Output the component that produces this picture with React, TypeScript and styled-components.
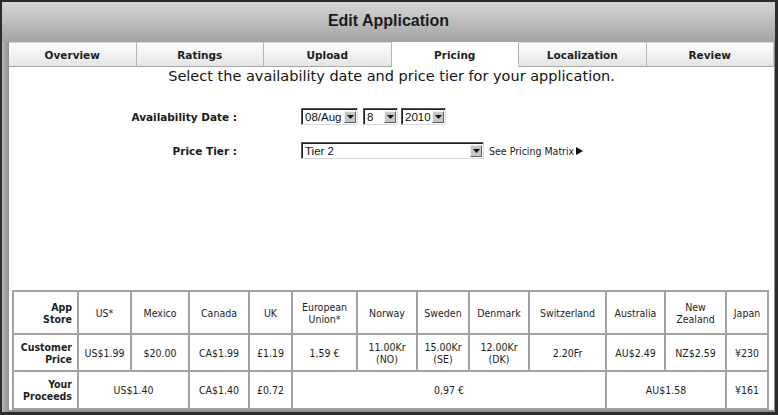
import React from 'react';
import styled, {createGlobalStyle, css} from 'styled-components';

const GlobalStyle = createGlobalStyle`
  html, body {
    margin: 0;
    padding: 0;
    background: #ffffff;
  }
  * {
    box-sizing: border-box;
  }
`;

const TABS = ['Overview', 'Ratings', 'Upload', 'Pricing', 'Localization', 'Review'];

const COL_WIDTHS = [65, 53, 58, 60, 43, 65, 60, 52, 60, 77, 59, 61, 42];

const STORES = ['US*', 'Mexico', 'Canada', 'UK', 'European\nUnion*', 'Norway', 'Sweden', 'Denmark', 'Switzerland', 'Australia', 'New\nZealand', 'Japan'];
const PRICES = ['US$1.99', '$20.00', 'CA$1.99', '£1.19', '1,59 €', '11.00Kr\n(NO)', '15.00Kr\n(SE)', '12.00Kr\n(DK)', '2.20Fr', 'AU$2.49', 'NZ$2.59', '¥230'];
const PROCEEDS: { value: string; span: number }[] = [
  {value: 'US$1.40', span: 2},
  {value: 'CA$1.40', span: 1},
  {value: '£0.72', span: 1},
  {value: '0,97 €', span: 5},
  {value: 'AU$1.58', span: 2},
  {value: '¥161', span: 1},
];

function Lines({text}: { text: string }) {
  const parts = text.split('\n');
  return (
      <>
        {parts.map((p, i) => (
            <React.Fragment key={i}>
              {p}
              {i < parts.length - 1 && <br/>}
            </React.Fragment>
        ))}
      </>
  );
}

function DropSelect({value, width}: { value: string; width: number }) {
  return (
      <SelectBox $width={width}>
        <SelectText>{value}</SelectText>
        <SelectButton>
          <svg width="7" height="4" viewBox="0 0 7 4">
            <path d="M0 0h7L3.5 4z" fill="#111"/>
          </svg>
        </SelectButton>
      </SelectBox>
  );
}

export default function App() {
  return (
      <>
        <GlobalStyle/>
        <Window>
          <TitleBar>Edit Application</TitleBar>
          <Body>
            <Panel>
              <TabRow>
                {TABS.map(t => (
                    <Tab key={t} $active={t === 'Pricing'}>{t}</Tab>
                ))}
              </TabRow>
              <Intro>Select the availability date and price tier for your application.</Intro>
              <Form>
                <FormRow>
                  <Label>Availability Date :</Label>
                  <Controls>
                    <DropSelect value="08/Aug" width={57}/>
                    <Gap $w={5}/>
                    <DropSelect value="8" width={35}/>
                    <Gap $w={3}/>
                    <DropSelect value="2010" width={45}/>
                  </Controls>
                </FormRow>
                <FormRow>
                  <Label>Price Tier :</Label>
                  <Controls>
                    <DropSelect value="Tier 2" width={183}/>
                    <MatrixLink>
                      See Pricing Matrix
                      <svg width="7" height="8" viewBox="0 0 7 8">
                        <path d="M0 0l7 4-7 4z" fill="#111"/>
                      </svg>
                    </MatrixLink>
                  </Controls>
                </FormRow>
              </Form>
              <PriceTable>
                <colgroup>
                  {COL_WIDTHS.map((w, i) => <col key={i} style={{width: w}}/>)}
                </colgroup>
                <tbody>
                <Row $h={43}>
                  <HeadCell>App<br/>Store</HeadCell>
                  {STORES.map(s => <Cell key={s}><Lines text={s}/></Cell>)}
                </Row>
                <Row $h={37}>
                  <HeadCell>Customer<br/>Price</HeadCell>
                  {PRICES.map(p => <Cell key={p}><Lines text={p}/></Cell>)}
                </Row>
                <Row $h={38}>
                  <HeadCell>Your<br/>Proceeds</HeadCell>
                  {PROCEEDS.map(p => <Cell key={p.value} colSpan={p.span}>{p.value}</Cell>)}
                </Row>
                </tbody>
              </PriceTable>
            </Panel>
          </Body>
        </Window>
      </>
  );
}

const Window = styled.div`
  width: 778px;
  height: 415px;
  display: flex;
  flex-direction: column;
  background: #9c9c9c;
  border-style: solid;
  border-color: #2c2c2c;
  border-width: 2px 3px 3px 2px;
`;

const TitleBar = styled.div`
  height: 40px;
  flex: none;
  display: flex;
  align-items: center;
  justify-content: center;
  padding-bottom: 2px;
  background: linear-gradient(#d6d6d6, #a3a3a3);
  font-family: "Liberation Sans", Arial, sans-serif;
  font-weight: bold;
  font-size: 16px;
  color: #1c1c1c;
`;

const Body = styled.div`
  flex: 1;
  display: flex;
  padding: 0 2px 2px 7px;
  background: linear-gradient(90deg, #b4b4b4, #8f8f8f 7px);
`;

const Panel = styled.div`
  flex: 1;
  display: flex;
  flex-direction: column;
  background: #ffffff;
`;

const TabRow = styled.div`
  display: grid;
  grid-template-columns: repeat(6, 1fr);
  height: 25px;
  flex: none;
`;

const Tab = styled.div<{ $active?: boolean }>`
  display: flex;
  align-items: center;
  justify-content: center;
  font-family: "DejaVu Sans", Verdana, sans-serif;
  font-weight: bold;
  font-size: 10.5px;
  color: #1e1e1e;
  background: linear-gradient(#ffffff, #e4e4e4);
  border-top: 1px solid #d8d8d8;
  border-right: 1px solid #b4b4b4;
  border-bottom: 1px solid #a6a6a6;
  padding-top: 1px;

  &:last-child {
    border-right: 1px solid #c4c4c4;
  }

  ${p => p.$active && css`
    background: #ffffff;
    border-bottom-color: #ffffff;
    border-top-color: #ffffff;
  `}
`;

const Intro = styled.div`
  text-align: center;
  margin-top: 1px;
  font-family: "DejaVu Sans", Verdana, sans-serif;
  font-size: 14.5px;
  line-height: 17px;
  color: #141414;
`;

const Form = styled.div`
  display: flex;
  flex-direction: column;
  gap: 17px;
  margin-top: 23px;
`;

const FormRow = styled.div`
  display: flex;
  align-items: center;
  height: 17px;
`;

const Label = styled.div`
  width: 228px;
  text-align: right;
  font-family: "DejaVu Sans", Verdana, sans-serif;
  font-weight: bold;
  font-size: 10.5px;
  color: #1a1a1a;
`;

const Controls = styled.div`
  display: flex;
  align-items: center;
  margin-left: 64px;
`;

const Gap = styled.span<{ $w: number }>`
  display: inline-block;
  width: ${p => p.$w}px;
`;

const SelectBox = styled.div<{ $width: number }>`
  width: ${p => p.$width}px;
  height: 17px;
  display: flex;
  align-items: center;
  justify-content: space-between;
  background: #ffffff;
  border-style: solid;
  border-width: 1px;
  border-color: #5a5a5a #d8d8d8 #d8d8d8 #5a5a5a;
  box-shadow: inset 1px 1px 0 #1c1c1c;
  padding: 1px 1px 0 3px;
`;

const SelectText = styled.span`
  font-family: "Liberation Sans", Arial, sans-serif;
  font-size: 11.5px;
  color: #111;
  white-space: nowrap;
`;

const SelectButton = styled.span`
  width: 12px;
  height: 12px;
  display: flex;
  align-items: center;
  justify-content: center;
  background: #c6c6c6;
  border-style: solid;
  border-width: 1px;
  border-color: #f0f0f0 #5e5e5e #5e5e5e #f0f0f0;
`;

const MatrixLink = styled.span`
  display: inline-flex;
  align-items: center;
  gap: 2px;
  margin-left: 5px;
  font-family: "DejaVu Sans Condensed", "DejaVu Sans", sans-serif;
  font-size: 10.5px;
  color: #1a1a1a;
`;

const PriceTable = styled.table`
  margin: auto 5px 0 3px;
  width: 755px;
  table-layout: fixed;
  border-collapse: collapse;
  border: 2px solid #a2a2a2;
  font-family: "DejaVu Sans Condensed", "DejaVu Sans", sans-serif;
  font-size: 10.5px;
  color: #1e1e1e;
`;

const Row = styled.tr<{ $h: number }>`
  height: ${p => p.$h}px;
`;

const Cell = styled.td`
  border: 2px solid #a2a2a2;
  text-align: center;
  vertical-align: middle;
  padding: 0 2px;
  line-height: 12px;
  white-space: nowrap;
`;

const HeadCell = styled(Cell)`
  text-align: right;
  font-weight: bold;
  padding-right: 5px;
`;
